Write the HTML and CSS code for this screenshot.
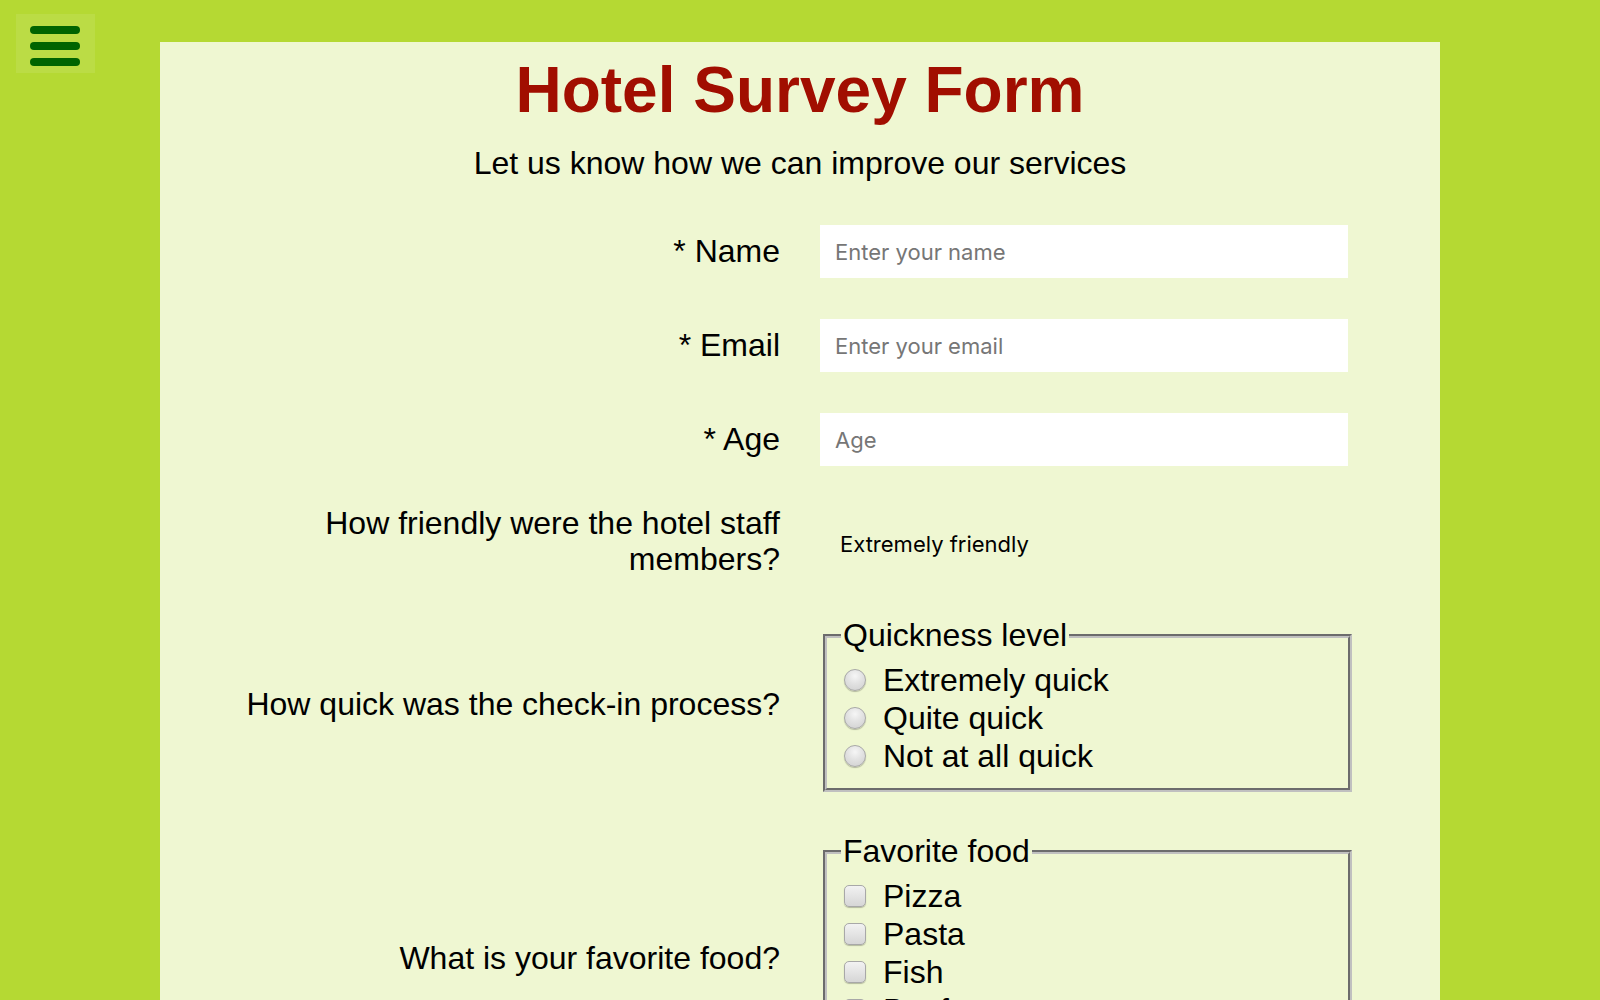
FILE: index.html
```html
<!DOCTYPE html>
<html lang="en">
<head>
<meta charset="utf-8">
<title>Hotel Survey Form</title>
<link rel="stylesheet" href="styles.css">
</head>
<body>
<button class="menu-toggle" type="button" aria-label="Menu">
  <span class="bar"></span><span class="bar"></span><span class="bar"></span>
</button>
<main class="card">
  <h1 class="title">Hotel Survey Form</h1>
  <p class="subtitle">Let us know how we can improve our services</p>
  <form class="survey">
    <div class="row">
      <label class="row-label" for="name">* Name</label>
      <div class="row-control"><input class="text-input" id="name" type="text" placeholder="Enter your name"></div>
    </div>
    <div class="row">
      <label class="row-label" for="email">* Email</label>
      <div class="row-control"><input class="text-input" id="email" type="email" placeholder="Enter your email"></div>
    </div>
    <div class="row row-before-tight">
      <label class="row-label" for="age">* Age</label>
      <div class="row-control"><input class="text-input" id="age" type="number" placeholder="Age"></div>
    </div>
    <div class="row row-tight">
      <label class="row-label" for="friendly">How friendly were the hotel staff members?</label>
      <div class="row-control"><div class="plain-select" id="friendly">Extremely friendly</div></div>
    </div>
    <div class="row">
      <div class="row-label">How quick was the check-in process?</div>
      <div class="row-control">
        <fieldset class="group">
          <legend class="group-legend">Quickness level</legend>
          <label class="option"><input class="radio" type="radio" name="quick"><span>Extremely quick</span></label>
          <label class="option"><input class="radio" type="radio" name="quick"><span>Quite quick</span></label>
          <label class="option"><input class="radio" type="radio" name="quick"><span>Not at all quick</span></label>
        </fieldset>
      </div>
    </div>
    <div class="row">
      <div class="row-label">What is your favorite food?</div>
      <div class="row-control">
        <fieldset class="group">
          <legend class="group-legend">Favorite food</legend>
          <label class="option"><input class="check" type="checkbox"><span>Pizza</span></label>
          <label class="option"><input class="check" type="checkbox"><span>Pasta</span></label>
          <label class="option"><input class="check" type="checkbox"><span>Fish</span></label>
          <label class="option"><input class="check" type="checkbox"><span>Beef</span></label>
          <label class="option"><input class="check" type="checkbox"><span>Chicken</span></label>
        </fieldset>
      </div>
    </div>
  </form>
</main>
</body>
</html>
```
FILE: styles.css
```css
html, body {
  margin: 0;
  padding: 0;
}

body {
  background: #b5d933;
  font-family: "Liberation Sans", Arial, Helvetica, sans-serif;
  color: #000;
}

.menu-toggle {
  position: fixed;
  top: 14px;
  left: 16px;
  width: 79px;
  height: 59px;
  padding: 12px 0 0 14px;
  margin: 0;
  border: none;
  background: rgba(255, 255, 255, 0.09);
  display: flex;
  flex-direction: column;
  align-items: flex-start;
  gap: 8px;
  box-sizing: border-box;
  cursor: pointer;
}

.bar {
  display: block;
  width: 50px;
  height: 8px;
  border-radius: 4px;
  background: #006400;
}

.card {
  width: 1280px;
  margin: 42px auto 0;
  padding: 11px 0 120px;
  background: #eff7d2;
  box-sizing: border-box;
}

.title {
  margin: 0;
  text-align: center;
  font-size: 64px;
  font-weight: bold;
  line-height: normal;
  color: #a10e00;
}

.subtitle {
  margin: 18px 0 0;
  text-align: center;
  font-size: 32px;
  line-height: normal;
}

.survey {
  margin-top: 43px;
}

.row {
  display: flex;
  align-items: center;
  margin-bottom: 41px;
}

.row-before-tight {
  margin-bottom: 39px;
}

.row-tight {
  margin-bottom: 40px;
}

.row-tight .row-label {
  line-height: 36px;
}

.row-label {
  flex: 0 0 620px;
  box-sizing: border-box;
  padding-left: 40px;
  text-align: right;
  font-size: 32px;
  line-height: normal;
}

.row-control {
  flex: 0 0 532px;
  margin-left: 40px;
}

.text-input {
  display: block;
  width: 528px;
  height: 53px;
  box-sizing: border-box;
  border: none;
  padding: 0 15px;
  margin: 0;
  background: #fff;
  font-family: Inter, "Open Sans", sans-serif;
  font-size: 22px;
  color: #000;
  outline: none;
  -moz-appearance: textfield;
}

.text-input::placeholder {
  color: #767676;
}

.text-input::-webkit-outer-spin-button,
.text-input::-webkit-inner-spin-button {
  -webkit-appearance: none;
  margin: 0;
}

.plain-select {
  padding: 6px 0 0 20px;
  font-family: Inter, "Open Sans", sans-serif;
  font-size: 22px;
  color: #000;
}

.group {
  margin: 0 0 0 3px;
  width: 529px;
  box-sizing: border-box;
  padding: 7px 14px 13px 14px;
  border: 4px groove #c0c0c0;
  font-size: 32px;
  line-height: normal;
}

.group-legend {
  padding: 0 2px;
  font-size: 32px;
  line-height: normal;
}

.option {
  display: flex;
  align-items: center;
  height: 38px;
}

.radio,
.check {
  -webkit-appearance: none;
  appearance: none;
  flex: 0 0 auto;
  width: 22px;
  height: 22px;
  margin: 0 17px 0 3px;
  box-sizing: border-box;
  border: 1px solid #a8a8a8;
  background: radial-gradient(circle at 50% 30%, #f6f6f6 0%, #e2e2e2 45%, #cfcfcf 100%);
  box-shadow: 0 1px 1px rgba(0, 0, 0, 0.25);
}

.radio {
  border-radius: 50%;
}

.check {
  border-radius: 5px;
  background: linear-gradient(#f2f2f2, #d6d6d6);
}
```
